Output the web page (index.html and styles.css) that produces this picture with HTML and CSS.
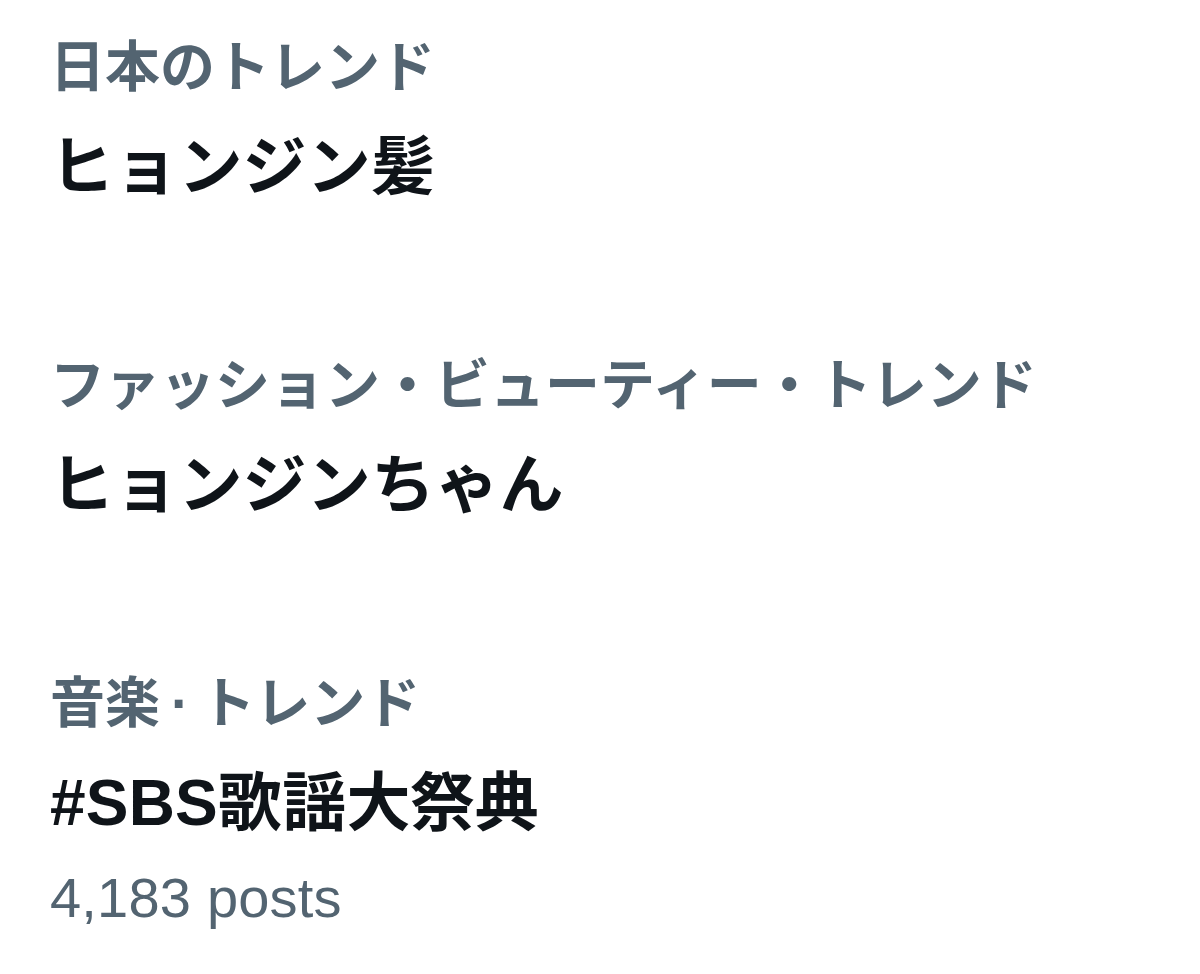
FILE: index.html
```html
<!DOCTYPE html>
<html lang="ja">
<head>
  <meta charset="UTF-8" />
  <meta name="viewport" content="width=device-width, initial-scale=1.0"/>
  <title>トレンド</title>
  <link rel="stylesheet" href="styles.css">
</head>
<body>
  <div class="trends">
    <div class="trend">
      <div class="trend-category">日本のトレンド</div>
      <div class="trend-name">ヒョンジン髪</div>
    </div>

    <div class="trend">
      <div class="trend-category">ファッション・ビューティー・トレンド</div>
      <div class="trend-name">ヒョンジンちゃん</div>
    </div>

    <div class="trend">
      <div class="trend-category">音楽&thinsp;·&thinsp;トレンド</div>
      <div class="trend-name">#SBS歌謡大祭典</div>
      <div class="trend-count">4,183 posts</div>
    </div>
  </div>
</body>
</html>
```

FILE: styles.css
```css
body { margin: 0; background-color: #fff; font-family: "Liberation Sans", "Noto Sans CJK JP", sans-serif; }
.trends { display: flex; flex-direction: column; gap: 118px; padding: 19px 50px 0; }
.trend-category { font-size: 55px; line-height: 96px; font-weight: 600; color: #536471; white-space: nowrap; }
.trend-name { font-size: 64px; line-height: 104px; font-weight: 700; color: #0f1419; white-space: nowrap; }
.trend-name, .trend-count { letter-spacing: 0.2px; }
.trend-count { font-size: 56px; line-height: 86px; color: #536471; }
```
